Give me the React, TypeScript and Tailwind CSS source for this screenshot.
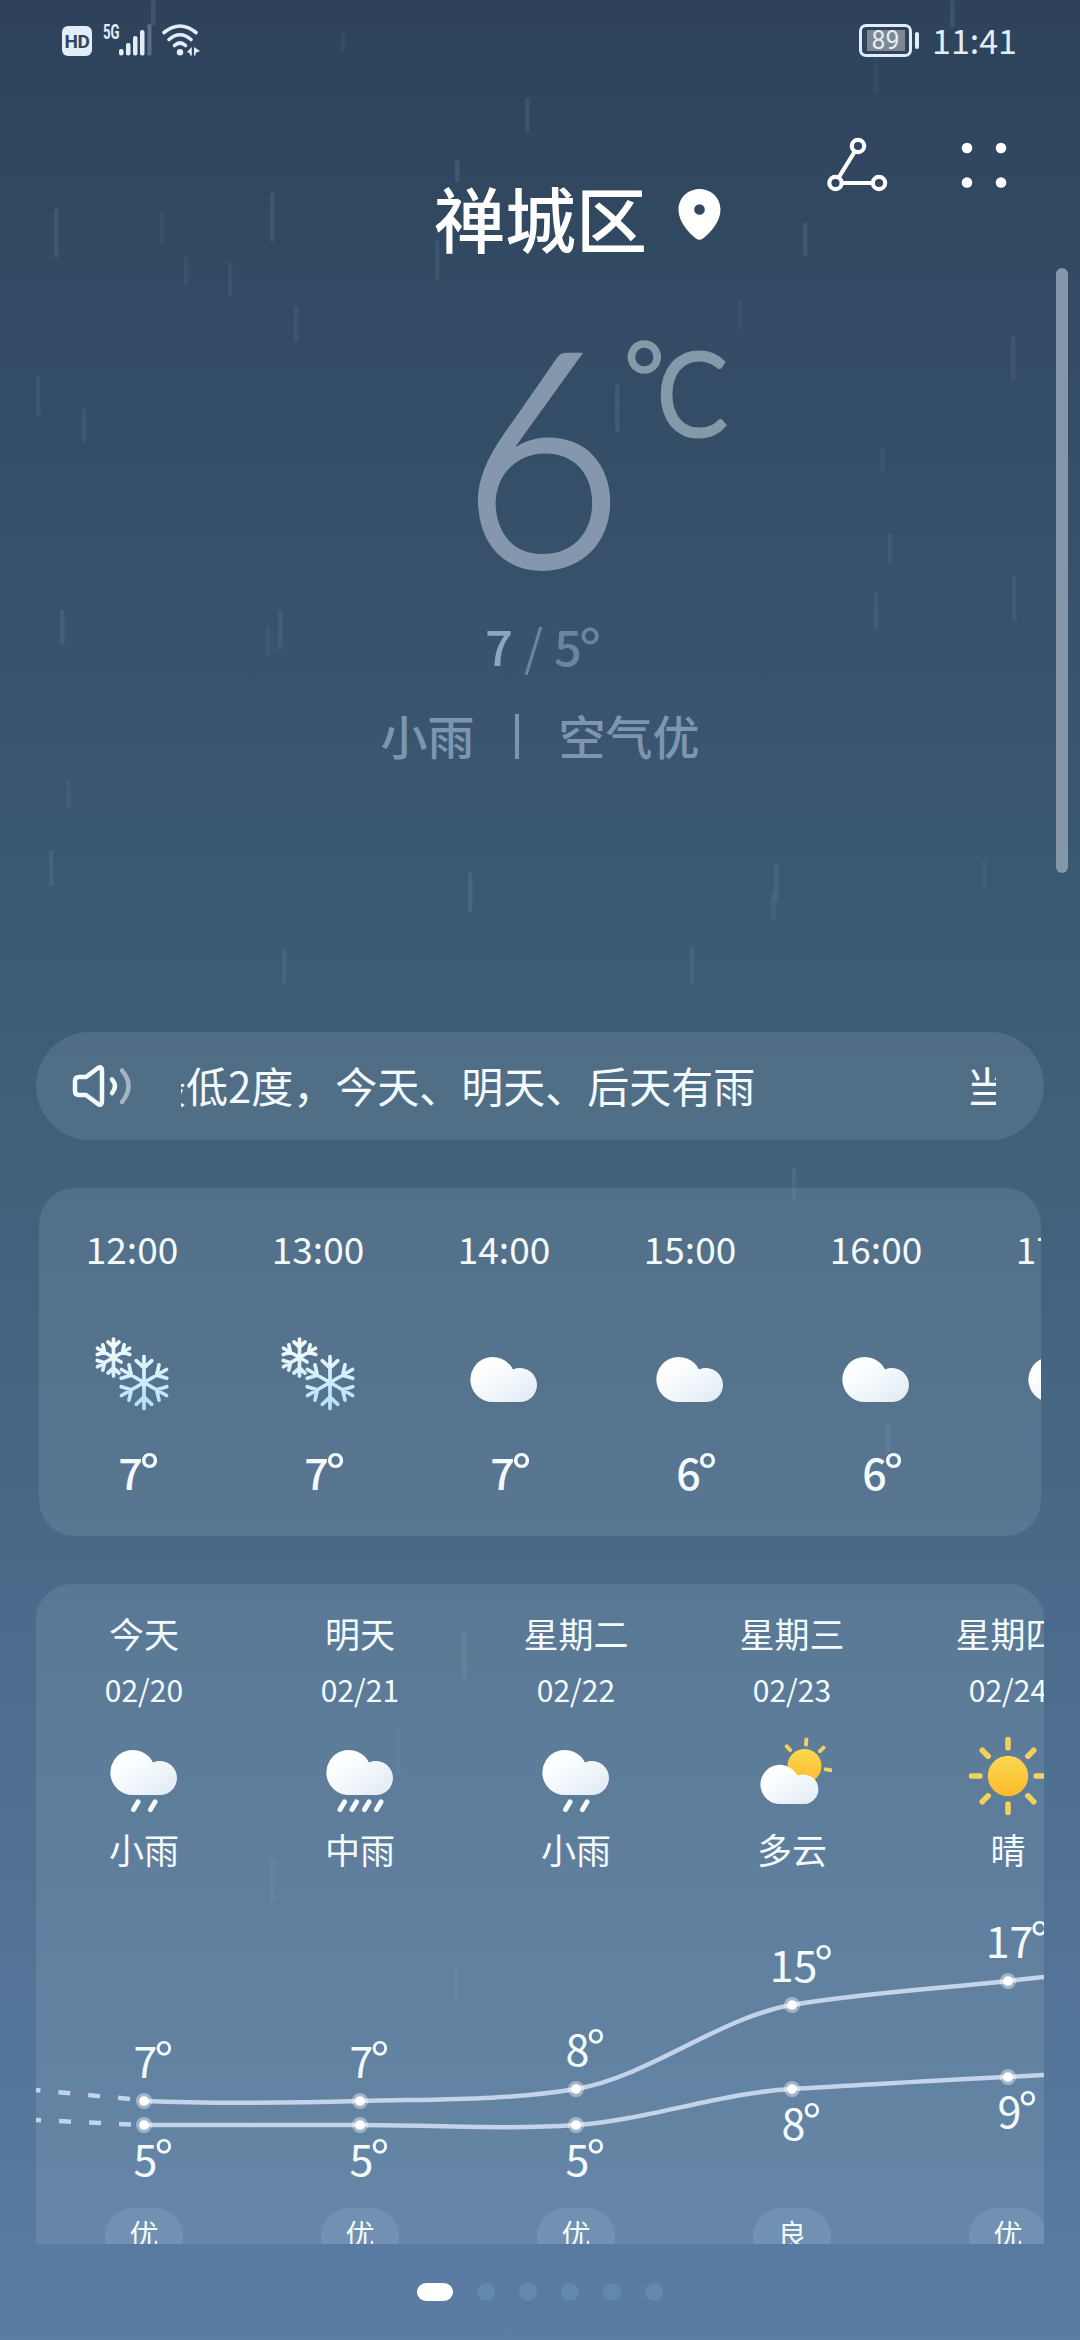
import type { ReactNode } from "react";

type Condition = "snow" | "cloudy" | "lightRain" | "rain" | "partly" | "sunny";

const hours: { time: string; icon: Condition; temp: number }[] = [
  { time: "12:00", icon: "snow", temp: 7 },
  { time: "13:00", icon: "snow", temp: 7 },
  { time: "14:00", icon: "cloudy", temp: 7 },
  { time: "15:00", icon: "cloudy", temp: 6 },
  { time: "16:00", icon: "cloudy", temp: 6 },
  { time: "17:00", icon: "cloudy", temp: 6 },
];

const days: { day: string; date: string; icon: Condition; text: string; high: number; low: number; air: string }[] = [
  { day: "今天", date: "02/20", icon: "lightRain", text: "小雨", high: 7, low: 5, air: "优" },
  { day: "明天", date: "02/21", icon: "rain", text: "中雨", high: 7, low: 5, air: "优" },
  { day: "星期二", date: "02/22", icon: "lightRain", text: "小雨", high: 8, low: 5, air: "优" },
  { day: "星期三", date: "02/23", icon: "partly", text: "多云", high: 15, low: 8, air: "良" },
  { day: "星期四", date: "02/24", icon: "sunny", text: "晴", high: 17, low: 9, air: "优" },
];

// x, y, length, opacity
const drops = [
  [153, 0, 26, 0.12], [343, 32, 20, 0.06], [527, 98, 34, 0.1], [457, 160, 22, 0.12], [272, 192, 50, 0.1],
  [56, 208, 50, 0.1], [162, 210, 34, 0.05], [186, 256, 30, 0.07], [437, 240, 40, 0.08], [805, 222, 34, 0.1],
  [952, 0, 28, 0.1], [876, 58, 36, 0.05], [230, 262, 34, 0.07], [296, 306, 36, 0.08], [38, 376, 40, 0.08],
  [84, 408, 34, 0.08], [617, 384, 48, 0.1], [62, 610, 34, 0.1], [280, 610, 40, 0.09], [268, 626, 30, 0.06],
  [876, 592, 38, 0.08], [890, 534, 30, 0.09], [882, 446, 28, 0.06], [1014, 575, 46, 0.07], [51, 850, 36, 0.09],
  [470, 872, 40, 0.11], [284, 950, 34, 0.09], [692, 946, 38, 0.08], [776, 862, 40, 0.08], [773, 890, 30, 0.07],
  [68, 780, 30, 0.06], [984, 860, 30, 0.05], [794, 1168, 32, 0.09], [888, 1422, 30, 0.1], [464, 1632, 46, 0.1],
  [272, 1858, 44, 0.06], [398, 1730, 44, 0.05], [456, 1968, 34, 0.06], [1013, 335, 46, 0.07], [740, 300, 30, 0.05],
];

function Rain() {
  return (
    <svg className="pointer-events-none absolute inset-0" width="1080" height="2340">
      {drops.map(([x, y, len, opacity], i) => (
        <rect key={i} x={x - 2} y={y} width="4.5" height={len} rx="2" fill="#b8d4e8" opacity={opacity} />
      ))}
    </svg>
  );
}

function StatusBar() {
  return (
    <div className="flex h-20 items-center justify-between pl-[62px] pr-[65px] text-[#e3edf8]">
      <div className="flex h-8 items-end">
        <span className="flex h-[30px] w-[30px] items-center justify-center rounded-md bg-[#e3edf8] font-[Roboto] text-[19px] font-bold leading-none tracking-[-0.5px] text-[#2e455c]">
          HD
        </span>
        <span className="ml-[11px] self-start font-[Roboto] text-[20px] font-bold leading-[16px]">
          <span className="inline-block w-4 origin-left scale-x-[0.66]">5G</span>
        </span>
        <svg className="h-8 w-[34px]" viewBox="0 0 34 32" fill="currentColor">
          <rect x="0" y="25" width="4.5" height="6.5" rx="2" />
          <rect x="7" y="19" width="4.5" height="12.5" rx="2" />
          <rect x="14" y="12" width="4.5" height="19.5" rx="2" />
          <rect x="21" y="6" width="4.5" height="25.5" rx="2" />
          <rect x="28.5" y="0" width="4" height="31.5" rx="1" opacity="0.25" />
        </svg>
        <svg className="ml-[9px] h-8 w-[38px]" viewBox="0 0 38 32" fill="none" stroke="currentColor" strokeWidth="3.6" strokeLinecap="round">
          <path d="M2 8.500Q18 -4.500 34 8.500" />
          <path d="M7 15.500Q18 6 29 15.500" />
          <path d="M12.500 21.500Q18 16.500 23.500 21.500" />
          <circle cx="18" cy="28.300" r="3.200" fill="currentColor" stroke="none" />
          <path d="M25 28L29.800 23V31.500H28V29.500zM32 23L38 27L33.500 29V31.500H32z" fill="currentColor" stroke="none" />
        </svg>
      </div>
      <div className="flex items-center">
        <span className="flex h-[33px] w-[53px] items-center justify-center rounded-[7px] border-[3px] border-current">
          <span className="flex h-[21px] w-[38px] items-center justify-center bg-[#7e8893] font-[Roboto] text-[25px] leading-none">89</span>
        </span>
        <span className="ml-[3px] h-[17px] w-1 rounded-sm bg-current" />
        <span className="-mr-[2px] ml-[13px] text-[34px] leading-none">11:41</span>
      </div>
    </div>
  );
}

function Header() {
  return (
    <header className="flex h-[190px] items-start pl-[434px] text-white">
      <h1 className="mt-[84px] flex items-center text-[71px] font-medium leading-[104px]">
        禅城区
        <svg className="ml-[31px] h-[51px] w-[43px] -translate-y-[2px]" viewBox="0 0 43 51">
          <path
            fill="currentColor"
            fillRule="evenodd"
            d="M21.500 0C9.500 0 .5 9.300.5 20.500c0 12 9.500 22.500 17.500 29q3.500 2.500 7 0c8-6.500 17.500-17 17.500-29C42.500 9.300 33.500 0 21.500 0zm0 15.200a5.300 5.300 0 1 1 0 10.600 5.300 5.300 0 0 1 0-10.600z"
          />
        </svg>
      </h1>
      <div className="ml-auto mt-14 flex gap-[73px] pr-[73px]">
        <svg className="h-[56px] w-[61px]" viewBox="0 0 61 56" fill="none" stroke="currentColor" strokeWidth="4.200">
          <circle cx="31" cy="10" r="6.200" />
          <circle cx="8.500" cy="47" r="6.200" />
          <circle cx="52" cy="47" r="6.200" />
          <path d="M27.800 15.500L11.700 41.500M14.700 47H45.800" />
        </svg>
        <svg className="mt-1 h-[48px] w-[46px]" viewBox="0 0 46 48" fill="currentColor">
          <circle cx="6" cy="8" r="5.300" />
          <circle cx="40" cy="8" r="5.300" />
          <circle cx="6" cy="42.500" r="5.300" />
          <circle cx="40" cy="42.500" r="5.300" />
        </svg>
      </div>
    </header>
  );
}

function Current() {
  return (
    <section className="flex flex-col items-center">
      <div className="flex h-[340px] w-full items-start pl-[456px] font-[Lato]">
        <span className="mt-[36px] h-[290px] w-[172px] origin-center scale-x-[0.94] text-[298px] font-light leading-[290px] text-[#8497ad] [-webkit-text-stroke:5px_#8497ad]">
          6
        </span>
        <span className="-ml-[4px] mt-[60px] text-[98px] leading-[90px] text-[#839ba9] [-webkit-text-stroke:1.5px_#839ba9]">°</span>
        <span className="-ml-[9px] mt-[57px] origin-left scale-x-[0.92] text-[118px] leading-[130px] text-[#839ba9] [-webkit-text-stroke:1px_#839ba9]">
          C
        </span>
      </div>
      <div className="flex h-[68px] items-center gap-[11px] pr-4 text-[49px] font-medium leading-none text-[#68869e]">
        <span className="text-[#8aa7bb]">7</span>
        <span className="font-normal">/</span>
        <span className="flex h-[49px]">
          5<span className="-ml-[3px] -mt-[2px] w-0 text-[58px]">°</span>
        </span>
      </div>
      <div className="mt-[23px] flex h-[66px] items-center text-[47px] font-medium leading-none text-[#7c96b1]">
        <span>小雨</span>
        <span className="mx-[40px] mt-[5px] h-[45px] w-1 bg-current" />
        <span>空气优</span>
      </div>
    </section>
  );
}

function Ticker() {
  return (
    <div className="mx-9 flex h-[108px] items-center rounded-full bg-[#a8b8c4]/18 pl-9 pr-12 text-[#f3fbff]">
      <svg className="h-[44px] w-[60px]" viewBox="0 0 60 44" fill="none" stroke="currentColor" strokeWidth="4.500" strokeLinecap="round" strokeLinejoin="round">
        <path d="M7 13H14L26 4Q30 1.500 30 7V37Q30 42.500 26 40L14 31H7Q3 31 3 27V17Q3 13 7 13z" />
        <path d="M40 15.500Q46 22 40 29" />
        <path d="M50 6.500Q63 22 50 38" opacity="0.5" />
      </svg>
      <div className="ml-[49px] flex w-[815px] items-center overflow-hidden whitespace-nowrap pb-[3px] text-[42px] leading-[60px]">
        <span className="-ml-[37px]">最低2度，今天、明天、后天有雨</span>
        <span className="ml-[211px]">当前</span>
      </div>
    </div>
  );
}

function CloudShape() {
  return <path d="M22 46A22.500 22.500 0 1 1 42 13.500A17 17 0 1 1 49.500 46z" fill="url(#cloud)" />;
}

// One arm of a flake per angle, each with a V near its tip
function flakePath(cx: number, cy: number, r: number, angles: number[]) {
  return angles
    .map((deg) => {
      const a = (deg * Math.PI) / 180;
      const at = (px: number, py: number) =>
        `${(cx + (px * Math.cos(a) - py * Math.sin(a)) * r).toFixed(2)} ${(cy + (px * Math.sin(a) + py * Math.cos(a)) * r).toFixed(2)}`;
      return `M${cx} ${cy}L${at(0, -1)}M${at(-0.3, -0.84)}L${at(0, -0.56)}L${at(0.3, -0.84)}`;
    })
    .join("");
}

function Rays({ x, y, inner, outer, angles, width }: { x: number; y: number; inner: number; outer: number; angles: number[]; width: number }) {
  return (
    <g transform={`translate(${x} ${y})`} stroke="#f2d25c" strokeWidth={width} strokeLinecap="round">
      {angles.map((a) => (
        <line key={a} x1="0" x2="0" y1={-inner} y2={-outer} transform={`rotate(${a})`} />
      ))}
    </g>
  );
}

function WeatherIcon({ name }: { name: Condition }) {
  return (
    <svg className="h-20 w-20" viewBox="0 0 80 80">
      {name === "snow" && (
        <g stroke="url(#snow)" strokeWidth="3.700" strokeLinecap="round" fill="none">
          <path d={flakePath(21.5, 23.5, 18.5, [0, 60, 180, 240, 300])} />
          <path d="M21.500 23.500L29 28" />
          <path d={flakePath(52, 48.5, 26, [0, 60, 120, 180, 240, 300])} />
        </g>
      )}
      {name === "cloudy" && (
        <g transform="translate(7 22)">
          <CloudShape />
        </g>
      )}
      {(name === "lightRain" || name === "rain") && (
        <g transform="translate(7 13)">
          <CloudShape />
          <g stroke="#f6fbff" strokeWidth="5" strokeLinecap="round">
            {(name === "rain" ? [13, 25, 37.5, 49.5] : [22.5, 39.5]).map((x) => (
              <line key={x} x1={x} y1="60.500" x2={x + 4.5} y2="53" />
            ))}
          </g>
        </g>
      )}
      {name === "partly" && (
        <>
          <circle cx="52.500" cy="30" r="17" fill="url(#sun)" />
          <Rays x={52.5} y={30} inner={21.5} outer={26.5} width={4} angles={[-42, 4, 46, 99]} />
          <g transform="translate(9 28) scale(0.870)">
            <CloudShape />
          </g>
        </>
      )}
      {name === "sunny" && (
        <>
          <circle cx="40" cy="40" r="20.200" fill="url(#sun)" />
          <Rays x={40} y={40} inner={28} outer={36.5} width={5.5} angles={[0, 45, 90, 135, 180, 225, 270, 315]} />
        </>
      )}
    </svg>
  );
}

// The degree sign hangs outside so that the digits stay centred
function Degrees({ children }: { children: ReactNode }) {
  return (
    <span className="flex h-[44px] whitespace-nowrap text-[43px] leading-[44px]">
      {children}
      <span className="-ml-[3px] -mt-px w-0 text-[51px]">°</span>
    </span>
  );
}

function Hourly() {
  return (
    <section className="mx-[39px] mt-12 flex h-[348px] overflow-hidden rounded-[36px] bg-[#a8b8c4]/18 text-[#f3fbff]">
      {hours.map((h) => (
        <div key={h.time} className="flex w-[186px] shrink-0 flex-col items-center">
          <span className="mt-[37px] text-[37px] leading-[46px]">{h.time}</span>
          <div className="mt-[63px] h-20">
            <WeatherIcon name={h.icon} />
          </div>
          <div className="mt-[35px] pr-[6px] font-medium">
            <Degrees>{h.temp}</Degrees>
          </div>
        </div>
      ))}
    </section>
  );
}

function TempChart() {
  return (
    <svg className="absolute left-0 top-0" width="1008" height="260" fill="none">
      <g stroke="#c3d3ea" strokeWidth="4.500">
        <path d="M108 157C180 160 252 159 324 157S468 157 540 145S684 73 756 61S900 45 972 37L1008 33" />
        <path d="M108 181C180 181 252 181 324 181S468 186 540 181S684 149 756 145S900 136 972 133L1008 131" />
        <path d="M94 155L0 146" strokeDasharray="12 18" />
        <path d="M95 180.500L0 176" strokeDasharray="12 18" />
      </g>
      {days.map((d, i) => (
        <g key={d.date} fill="#fff">
          {[d.high, d.low].map((t) => (
            <g key={t}>
              <circle cx={108 + i * 216} cy={241 - t * 12} r="8" opacity="0.4" />
              <circle cx={108 + i * 216} cy={241 - t * 12} r="4.800" />
            </g>
          ))}
        </g>
      ))}
    </svg>
  );
}

function Daily() {
  return (
    <section className="mx-9 mt-12 h-[660px] overflow-hidden rounded-t-[36px] bg-[#a4bac6]/18 text-[#f3fbff]">
      <div className="flex">
        {days.map((d) => (
          <div key={d.date} className="flex w-[216px] shrink-0 flex-col items-center">
            <span className="mt-6 text-[35px] leading-[50px]">{d.day}</span>
            <span className="mt-[7px] text-[30px] leading-[48px]">{d.date}</span>
            <div className="mt-[23px] h-20">
              <WeatherIcon name={d.icon} />
            </div>
            <span className="mt-2 text-[35px] leading-[50px]">{d.text}</span>
          </div>
        ))}
      </div>
      <div className="relative mt-[70px] flex h-[260px]">
        <TempChart />
        {days.map((d) => (
          <div key={d.date} className="flex w-[216px] shrink-0 flex-col items-center">
            <div className="flex flex-col items-center justify-between" style={{ marginTop: 177 - d.high * 12, height: 118 + (d.high - d.low) * 12 }}>
              <Degrees>{d.high}</Degrees>
              <Degrees>{d.low}</Degrees>
            </div>
          </div>
        ))}
      </div>
      <div className="mt-1 flex">
        {days.map((d) => (
          <div key={d.date} className="flex w-[216px] shrink-0 justify-center">
            <span className="h-14 w-[78px] rounded-[28px] bg-[#9fbbe0]/20 text-center text-[29px] leading-[50px]">{d.air}</span>
          </div>
        ))}
      </div>
    </section>
  );
}

function PageDots() {
  return (
    <div className="mt-[39px] flex items-center justify-center gap-6">
      <span className="h-[18px] w-9 rounded-full bg-white" />
      {[1, 2, 3, 4, 5].map((i) => (
        <span key={i} className="h-[18px] w-[18px] rounded-full bg-[#7fb0d8]/25" />
      ))}
    </div>
  );
}

export default function App() {
  return (
    <div className="relative h-[2340px] w-[1080px] overflow-hidden bg-linear-to-b from-[#2e435b] via-[#40607c] to-[#5b7da4] font-['Noto_Sans_CJK_SC',sans-serif]">
      <Rain />
      {/* Shared icon gradients */}
      <svg className="absolute h-0 w-0">
        <defs>
          <linearGradient id="cloud" x1="0" y1="0" x2="1" y2="1">
            <stop offset="0.300" stopColor="#fcfeff" />
            <stop offset="1" stopColor="#dfe9f3" />
          </linearGradient>
          <linearGradient id="snow" gradientUnits="userSpaceOnUse" x1="0" y1="10" x2="0" y2="78">
            <stop offset="0" stopColor="#f4fbff" />
            <stop offset="1" stopColor="#ace0fb" />
          </linearGradient>
          <linearGradient id="sun" x1="0" y1="0" x2="0" y2="1">
            <stop offset="0" stopColor="#fbd850" />
            <stop offset="1" stopColor="#fcbb2c" />
          </linearGradient>
        </defs>
      </svg>
      <div className="relative flex flex-col">
        <StatusBar />
        <Header />
        <div className="h-[762px]">
          <Current />
        </div>
        <Ticker />
        <Hourly />
        <Daily />
        <PageDots />
      </div>
      {/* Scroll indicator */}
      <div className="absolute right-3 top-[268px] h-[605px] w-3 rounded-full bg-[#8496aa]" />
    </div>
  );
}
